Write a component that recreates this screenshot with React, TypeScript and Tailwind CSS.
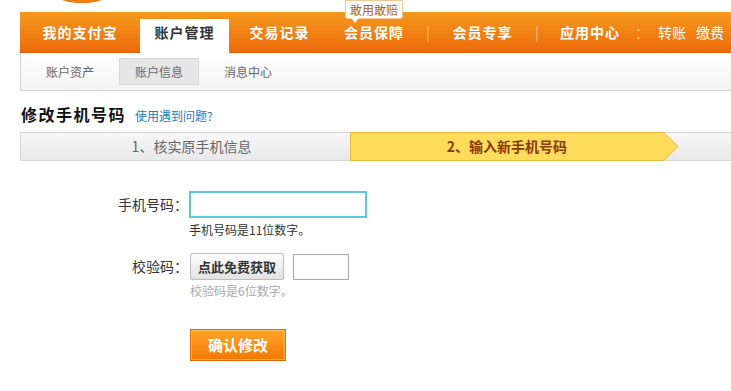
import React from 'react';

const navItems = [
  { label: '我的支付宝', w: 'w-[120px]' },
  { label: '账户管理', w: 'w-[89px]', active: true },
  { label: '交易记录', w: 'w-[101px]' },
  { label: '会员保障', w: 'w-[88px]' },
  { label: '|', w: 'w-[20px]', sep: true },
  { label: '会员专享', w: 'w-[89px]' },
  { label: '|', w: 'w-[20px]', sep: true },
  { label: '应用中心', w: 'w-[86px]' },
  { label: '：', w: 'w-[18px]', sep: true },
];

const subItems = [
  { label: '账户资产' },
  { label: '账户信息', active: true },
  { label: '消息中心' },
];

export default function App() {
  return (
    <div className="relative w-[731px] h-[391px] overflow-hidden bg-white text-[#333] font-['Noto_Sans_CJK_SC','Liberation_Sans',sans-serif]">
      {/* logo sliver */}
      <div className="h-[12px] relative">
        <svg className="absolute left-[52px] top-0" width="60" height="4" viewBox="0 0 60 4">
          <ellipse cx="30" cy="-8" rx="29" ry="11" fill="#f07a14" />
        </svg>
      </div>

      {/* main nav */}
      <div className="ml-[20px] h-[41px] flex items-stretch bg-gradient-to-b from-[#f5991e] to-[#ec6a0a] border-b border-[#e0620a]">
        {navItems.map((it, i) =>
          it.active ? (
            <div key={i} className={`${it.w} mt-[7px] pb-[7px] bg-white flex items-center justify-center text-[14px] tracking-[1px] font-bold text-[#333] -mb-px`}>
              {it.label}
            </div>
          ) : (
            <div
              key={i}
              className={`${it.w} flex items-center justify-center text-[14px] ${it.sep ? 'text-[#f9c27e]' : 'font-bold tracking-[1px] text-white'}`}
            >
              {it.label}
            </div>
          )
        )}
        <div className="flex items-center gap-[10px] pl-[7px] text-[14px] text-white">
          <span>转账</span>
          <span>缴费</span>
        </div>
      </div>

      {/* tooltip */}
      <div className="absolute left-[345px] top-0 h-[19px] px-[4px] flex items-center bg-white border border-[#f2c892] rounded-b-[3px] text-[12px] leading-none text-[#b0601c]">
        敢用敢赔
        <span className="absolute left-[5px] -bottom-[5px] w-0 h-0 border-l-[4px] border-r-[4px] border-t-[5px] border-l-transparent border-r-transparent border-t-white" />
      </div>

      {/* sub nav */}
      <div className="ml-[20px] h-[38px] flex items-center gap-[10px] pl-[10px] border-l border-b border-[#d4d4d4] bg-gradient-to-b from-white to-[#f3f3f3]">
        {subItems.map((s) => (
          <div
            key={s.label}
            className={`h-[27px] px-[15px] flex items-center text-[12px] text-[#666] ${s.active ? 'bg-[#e6e6e6] border border-[#d8d8d8]' : ''}`}
          >
            {s.label}
          </div>
        ))}
      </div>

      {/* title */}
      <div className="ml-[21px] mt-[12px] flex items-baseline gap-[9px]">
        <h1 className="text-[16px] tracking-[1.5px] font-bold text-[#111] leading-[22px]">修改手机号码</h1>
        <a className="text-[12px] text-[#1f79b8]">使用遇到问题?</a>
      </div>

      {/* steps */}
      <div className="ml-[20px] mt-[7px] h-[29px] flex bg-gradient-to-b from-[#f7f7f7] to-[#e9e9e9] border-y border-l border-[#d6d6d6]">
        <div className="w-[329px] flex items-center justify-center pl-[12px] text-[14px] text-[#666]">1、核实原手机信息</div>
        <div className="relative w-[329px] -my-px flex items-center justify-center pr-[15px] text-[14px] font-bold text-[#8a3a00]">
          <svg className="absolute inset-0" width="329" height="29" viewBox="0 0 329 29">
            <polygon points="0.5,0.5 314,0.5 328,14.5 314,28.5 0.5,28.5" fill="#ffdc5c" stroke="#e6bb3a" />
          </svg>
          <span className="relative">2、输入新手机号码</span>
        </div>
      </div>

      {/* form */}
      <div className="mt-[30px] flex flex-col">
        <div className="flex items-start">
          <label className="w-[188px] text-right text-[14px] leading-[27px] text-[#333]">手机号码：</label>
          <div className="flex flex-col ml-[1px]">
            <input className="w-[178px] h-[27px] border-2 border-[#5ec7de] outline-none px-1 text-[14px]" />
            <div className="mt-[4px] text-[12px] leading-[16px] text-[#333]">手机号码是11位数字。</div>
          </div>
        </div>

        <div className="flex items-start mt-[15px]">
          <label className="w-[188px] text-right text-[14px] leading-[27px] text-[#333]">校验码：</label>
          <div className="flex flex-col ml-[2px]">
            <div className="flex items-center gap-[9px]">
              <button className="w-[94px] h-[27px] border border-[#bdbdbd] rounded-[2px] bg-gradient-to-b from-[#fdfdfd] to-[#e2e2e2] text-[13px] font-bold text-[#333]">
                点此免费获取
              </button>
              <input className="w-[56px] h-[26px] border border-[#a9a9a9] outline-none px-1" />
            </div>
            <div className="mt-[3px] text-[12px] leading-[16px] text-[#aaa]">校验码是6位数字。</div>
          </div>
        </div>

        <div className="ml-[190px] mt-[30px]">
          <button className="w-[96px] h-[32px] border border-[#e06a00] bg-gradient-to-b from-[#ffa526] to-[#f27800] shadow-[inset_0_0_0_1px_rgba(255,210,140,0.6)] text-[15px] font-bold text-white">
            确认修改
          </button>
        </div>
      </div>
    </div>
  );
}
